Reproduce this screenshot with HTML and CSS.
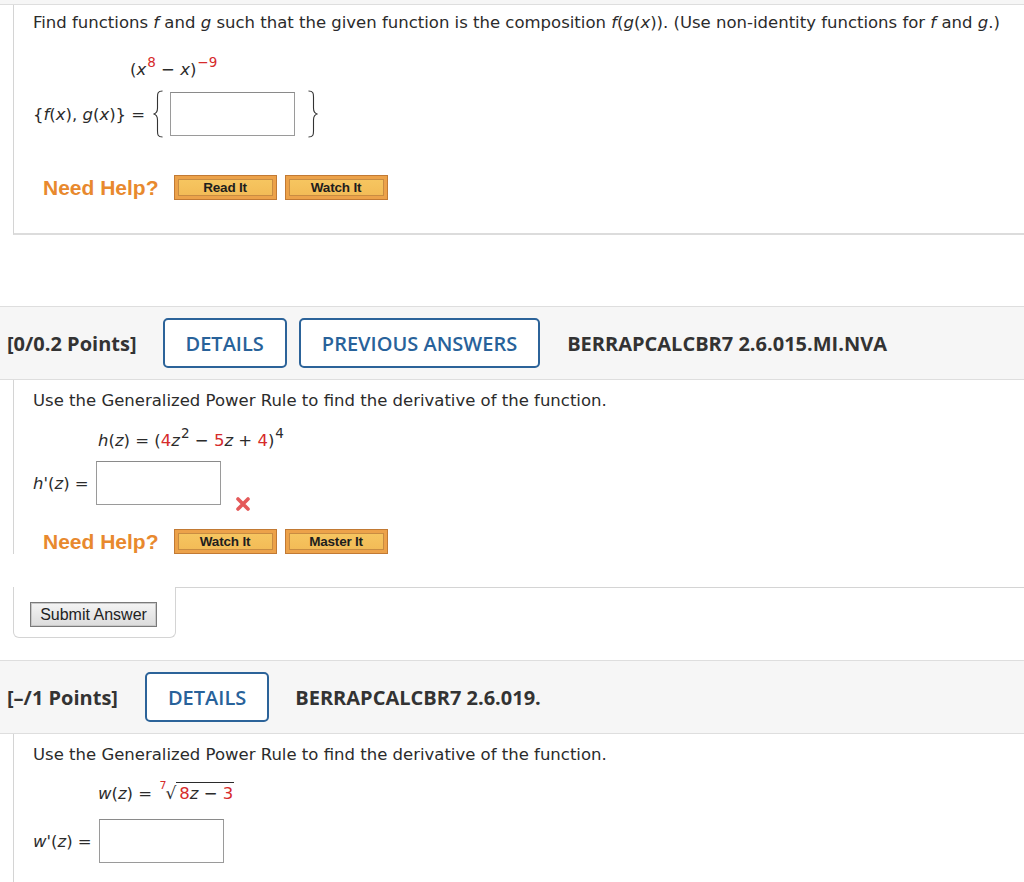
FILE: index.html
```html
<!DOCTYPE html>
<html>
<head>
<meta charset="utf-8">
<link rel="stylesheet" href="styles.css">
</head>
<body>
<div class="strip"></div>

<section class="panel first">
  <p class="text">Find functions <i>f</i> and <i>g</i> such that the given function is the composition <i>f</i>(<i>g</i>(<i>x</i>)). (Use non-identity functions for <i>f</i> and <i>g</i>.)</p>
  <div class="formula indent-wide">(<i>x</i><sup class="red">8</sup> − <i>x</i>)<sup class="red">−9</sup></div>
  <div class="answer-row row-first">
    <span class="label">{<i>f</i>(<i>x</i>), <i>g</i>(<i>x</i>)} =</span>
    <svg class="brace brace-open" width="12" height="48" viewBox="0 0 12 48"><path d="M10.5 1 C6 1 5.5 3 5.5 7 L5.5 18 C5.5 22 4.5 23.5 1.5 24 C4.5 24.5 5.5 26 5.5 30 L5.5 41 C5.5 45 6 47 10.5 47" fill="none" stroke="#333" stroke-width="1.1"/></svg>
    <input class="answer" type="text">
    <svg class="brace brace-close" width="12" height="48" viewBox="0 0 12 48"><path d="M1.5 1 C6 1 6.5 3 6.5 7 L6.5 18 C6.5 22 7.5 23.5 10.5 24 C7.5 24.5 6.5 26 6.5 30 L6.5 41 C6.5 45 6 47 1.5 47" fill="none" stroke="#333" stroke-width="1.1"/></svg>
  </div>
  <div class="help">
    <span class="need">Need Help?</span>
    <button class="hbtn">Read It</button>
    <button class="hbtn">Watch It</button>
  </div>
</section>

<header class="qhead head-second">
  <span class="points">[0/0.2 Points]</span>
  <button class="obtn">DETAILS</button>
  <button class="obtn">PREVIOUS ANSWERS</button>
  <span class="code">BERRAPCALCBR7 2.6.015.MI.NVA</span>
</header>

<section class="wrap">
  <div class="panel second">
    <p class="text">Use the Generalized Power Rule to find the derivative of the function.</p>
    <div class="formula indent">
      <i>h</i>(<i>z</i>) = (<span class="red">4</span><i>z</i><sup>2</sup> − <span class="red">5</span><i>z</i> + <span class="red">4</span>)<sup>4</sup>
    </div>
    <div class="answer-row row-second">
      <span class="label"><i>h</i>'(<i>z</i>) =</span>
      <input class="answer" type="text">
      <svg class="wrong" width="16" height="16" viewBox="0 0 16 16"><path d="M3 3 L13 13 M13 3 L3 13" stroke="#e45a5a" stroke-width="3.6" stroke-linecap="round"/></svg>
    </div>
    <div class="help help-second">
      <span class="need">Need Help?</span>
      <button class="hbtn">Watch It</button>
      <button class="hbtn">Master It</button>
    </div>
  </div>
  <div class="submit-row">
    <div class="submit-tab"><button class="submit">Submit Answer</button></div>
    <div class="submit-fill"></div>
  </div>
</section>

<header class="qhead head-third">
  <span class="points">[–/1 Points]</span>
  <button class="obtn">DETAILS</button>
  <span class="code">BERRAPCALCBR7 2.6.019.</span>
</header>

<section class="panel third">
  <p class="text">Use the Generalized Power Rule to find the derivative of the function.</p>
  <div class="formula indent">
    <i>w</i>(<i>z</i>) = <span class="root"><sup class="red idx">7</sup><span class="rad">√</span><span class="radicand"><span class="red">8</span><i>z</i> − <span class="red">3</span></span></span>
  </div>
  <div class="answer-row row-third">
    <span class="label"><i>w</i>'(<i>z</i>) =</span>
    <input class="answer" type="text">
  </div>
</section>
</body>
</html>
```

FILE: styles.css
```css
* { box-sizing: border-box; }

body {
  margin: 0;
  background: #fff;
  color: #2b2b2b;
  font-family: "DejaVu Sans", Verdana, sans-serif;
  font-size: 16.5px;
}

.strip {
  height: 5px;
  background: #f6f6f6;
  border-bottom: 1px solid #dedede;
}

.panel {
  margin-left: 13px;
  border-left: 1px solid #d4d4d4;
  padding-left: 19px;
}

.first {
  padding-top: 8px;
  padding-bottom: 33px;
  border-bottom: 2px solid #dcdcdc;
}

.text {
  margin: 0;
  line-height: 20px;
  white-space: nowrap;
}

.formula {
  line-height: 20px;
  height: 20px;
  white-space: nowrap;
}

.indent-wide { margin-left: 97px; margin-top: 23px; }
.indent { margin-left: 65px; }

.second .indent { margin-top: 16px; }
.third .indent { margin-top: 15px; }

i { font-style: italic; }

sup {
  font-size: 13.5px;
  line-height: 1;
  vertical-align: 8px;
  margin-left: 1px;
}

.red { color: #d62b2b; }

.answer-row {
  display: flex;
  align-items: center;
}

.row-first { margin-top: 14px; height: 48px; }
.row-second { margin-top: 14px; }
.row-third { margin-top: 19px; }

.label { white-space: nowrap; }

.brace-open { margin-left: 7px; margin-right: 6px; }
.brace-close { margin-left: 12px; }

.answer {
  width: 125px;
  height: 44px;
  border: 1px solid #9a9a9a;
  border-top-color: #8a8a8a;
  background: #fff;
  margin: 0;
  padding: 0 4px;
  font: inherit;
}

.row-second .answer { margin-left: 7px; }
.row-third .answer { margin-left: 7px; }

.wrong {
  align-self: flex-end;
  margin-left: 14px;
  margin-bottom: -7px;
}

.help {
  display: flex;
  align-items: center;
  margin-top: 37px;
  margin-left: 10px;
  height: 25px;
}

.help-second { margin-top: 24px; margin-bottom: 33px; }

.need {
  font-family: "Liberation Sans", Arial, sans-serif;
  font-weight: bold;
  font-size: 21px;
  color: #e8892e;
  margin-right: 15px;
}

.hbtn {
  width: 103px;
  height: 25px;
  margin: 0 8px 0 0;
  padding: 0;
  border: 1px solid #c27a34;
  background: linear-gradient(#f7c862, #f2b955);
  box-shadow: inset 0 0 0 3px #eca24a, inset 0 0 0 4px #c98c42;
  font-family: "Liberation Sans", Arial, sans-serif;
  font-weight: bold;
  font-size: 13.5px;
  letter-spacing: -0.2px;
  color: #1e1e1e;
}

.qhead {
  display: flex;
  align-items: center;
  height: 74px;
  padding-left: 7px;
  background: #f6f6f6;
  border-top: 1px solid #dedede;
  border-bottom: 1px solid #dedede;
  font-family: "Open Sans", sans-serif;
  font-size: 20px;
}

.head-second { margin-top: 71px; }
.head-third { margin-top: 22px; }

.points {
  font-weight: 700;
  color: #333;
  margin-right: 26px;
}

.head-third .points { margin-right: 27px; }

.obtn {
  height: 50px;
  padding: 0 21px;
  margin: 0 12px 0 0;
  border: 2px solid #2c6399;
  border-radius: 5px;
  background: #fff;
  color: #28629a;
  font-family: "Open Sans", sans-serif;
  font-weight: 600;
  font-size: 20px;
}

.code {
  margin-left: 15px;
  font-weight: 700;
  color: #333;
}

.head-third .code { margin-left: 14px; }

.wrap { margin-left: 13px; }

.second {
  margin-left: 0;
  padding-top: 11px;
}

.submit-row {
  display: flex;
}

.submit-tab {
  width: 163px;
  padding: 15px 0 10px 16px;
  border-left: 1px solid #d4d4d4;
  border-right: 1px solid #d4d4d4;
  border-bottom: 1px solid #d4d4d4;
  border-radius: 0 0 6px 6px;
}

.submit-fill {
  flex: 1;
  border-top: 1px solid #d4d4d4;
}

.submit {
  display: block;
  width: 127px;
  height: 25px;
  margin: 0;
  padding: 0;
  border: 1px solid #7a7a7a;
  box-shadow: inset 0 0 0 1px #c8c8c8;
  background: linear-gradient(#f4f4f4, #dcdcdc);
  font-family: "Liberation Sans", Arial, sans-serif;
  font-size: 16px;
  color: #222;
}

.third {
  padding-top: 11px;
  padding-bottom: 20px;
}

.root { white-space: nowrap; }

.idx {
  font-size: 11px;
  vertical-align: 10px;
  margin-right: -1px;
  margin-left: 2px;
}

.rad { font-size: 17px; }

.radicand {
  border-top: 1px solid #2b2b2b;
  padding: 1px 1px 0 3px;
}
```
